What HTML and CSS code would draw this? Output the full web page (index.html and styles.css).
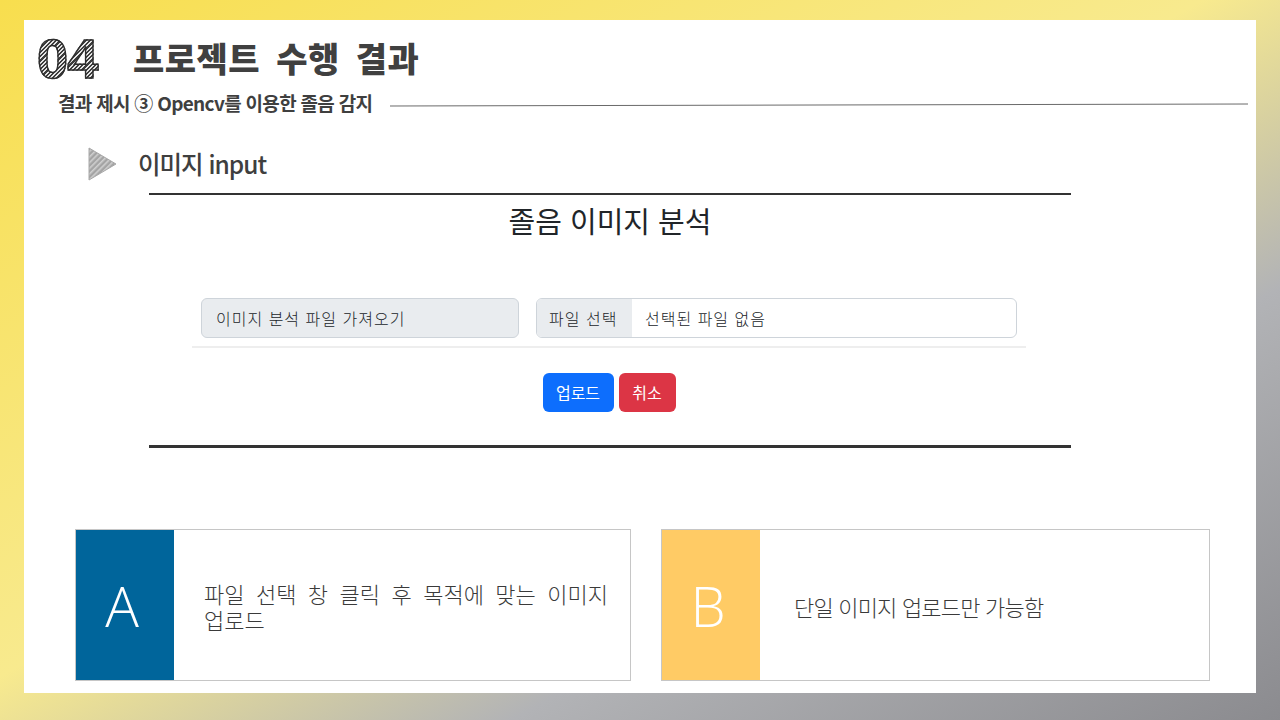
FILE: index.html
```html
<!DOCTYPE html>
<html lang="ko">
<head>
<meta charset="utf-8">
<title>프로젝트 수행 결과</title>
<link rel="stylesheet" href="styles.css">
</head>
<body>
<main class="stage">
  <section class="panel">
    <header class="title-row">
      <span class="number">04</span>
      <h1 class="title">프로젝트 수행 결과</h1>
    </header>
    <div class="sub-row">
      <h2 class="subtitle">결과 제시 ③ Opencv를 이용한 졸음 감지</h2>
      <svg class="sub-line" width="858" height="4" viewBox="0 0 858 4"><line x1="0" y1="3" x2="858" y2="1" stroke="#6a6a6a" stroke-width="1"/></svg>
    </div>
    <div class="section-head">
      <svg class="arrow" width="30" height="34" viewBox="0 0 30 34">
        <defs>
          <pattern id="hatch" width="4" height="4" patternUnits="userSpaceOnUse" patternTransform="rotate(45)">
            <rect width="4" height="4" fill="#a4a4a4"/>
            <rect width="1.6" height="4" fill="#cfcfcf"/>
          </pattern>
        </defs>
        <polygon points="2,1 29,17 2,33" fill="url(#hatch)" stroke="#a8a8a8" stroke-width="1"/>
      </svg>
      <h3 class="section-title">이미지 input</h3>
    </div>
    <div class="shot">
      <h4 class="shot-title">졸음 이미지 분석</h4>
      <div class="form-row">
        <div class="field-label">이미지 분석 파일 가져오기</div>
        <div class="file-input">
          <span class="file-btn">파일 선택</span>
          <span class="file-name">선택된 파일 없음</span>
        </div>
      </div>
      <div class="actions">
        <button class="btn btn-blue">업로드</button>
        <button class="btn btn-red">취소</button>
      </div>
    </div>
    <div class="cards">
      <article class="card card-a">
        <div class="badge badge-a">A</div>
        <p class="card-text card-text-a">파일 선택 창 클릭 후 목적에 맞는 이미지 업로드</p>
      </article>
      <article class="card card-b">
        <div class="badge badge-b">B</div>
        <p class="card-text card-text-b">단일 이미지 업로드만 가능함</p>
      </article>
    </div>
  </section>
</main>
</body>
</html>
```
FILE: styles.css
```css
* { box-sizing: border-box; }
html, body { margin: 0; padding: 0; }
body { font-family: "Noto Sans CJK KR", "Noto Sans", sans-serif; }

.stage {
  width: 1280px;
  height: 720px;
  padding: 20px 24px 27px;
  background: linear-gradient(to bottom right, #f8de4e 0%, #f8ea8e 47%, #b2b3b6 70%, #8b8b8f 100%);
  overflow: hidden;
}
.panel {
  width: 1232px;
  height: 673px;
  background: #fff;
  display: flex;
  flex-direction: column;
  color: #3f3f3f;
}

.title-row {
  display: flex;
  align-items: center;
  height: 60px;
  margin-top: 8px;
  padding-left: 13px;
}
.number {
  width: 96px;
  margin-top: 2px;
  font-family: "Liberation Sans", sans-serif;
  font-weight: 700;
  font-size: 56px;
  line-height: 60px;
  letter-spacing: -1px;
  color: transparent;
  background: repeating-linear-gradient(135deg, #3c3c3c 0 1.6px, #e4e4e4 1.6px 3px);
  -webkit-background-clip: text;
  background-clip: text;
  -webkit-text-stroke: 1.4px #2e2e2e;
}
.title {
  margin: 0;
  font-size: 34px;
  font-weight: 900;
  line-height: 60px;
  word-spacing: 6px;
  letter-spacing: 0.5px;
  color: #404040;
}

.sub-row {
  display: flex;
  align-items: center;
  height: 28px;
  margin-top: 1px;
  padding-left: 34px;
}
.subtitle {
  margin: 0;
  width: 332px;
  font-size: 19px;
  font-weight: 700;
  line-height: 28px;
  letter-spacing: -0.7px;
  white-space: nowrap;
}
.sub-line { display: block; margin-top: 4px; }

.section-head {
  display: flex;
  align-items: center;
  height: 40px;
  margin-top: 27px;
  padding-left: 63px;
  gap: 21px;
}
.arrow { display: block; }
.section-title {
  margin: 0;
  font-size: 24.5px;
  font-weight: 500;
  line-height: 40px;
  letter-spacing: -1px;
}

.shot {
  width: 922px;
  height: 255px;
  margin: 9px 0 0 125px;
  border-top: 2px solid #333;
  border-bottom: 3px solid #333;
  color: #212529;
}
.shot-title {
  margin: 5px 0 0;
  height: 40px;
  font-size: 29px;
  font-weight: 400;
  line-height: 40px;
  text-align: center;
}
.form-row {
  display: flex;
  gap: 17px;
  width: 834px;
  height: 50px;
  margin: 58px 0 0 43px;
  padding: 0 9px;
  border-bottom: 2px solid #eeeeee;
}
.field-label {
  width: 318px;
  height: 40px;
  padding: 0 14px;
  background: #e9ecef;
  border: 1px solid #ced4da;
  border-radius: 6px;
  font-size: 16px;
  font-weight: 300;
  line-height: 38px;
  letter-spacing: 1px;
}
.file-input {
  display: flex;
  width: 481px;
  height: 40px;
  border: 1px solid #ced4da;
  border-radius: 6px;
  overflow: hidden;
  font-size: 16px;
  font-weight: 300;
  line-height: 38px;
  letter-spacing: 1px;
}
.file-btn {
  width: 95px;
  padding-left: 12px;
  background: #e9ecef;
}
.file-name { padding-left: 13px; }

.actions {
  display: flex;
  justify-content: center;
  gap: 5px;
  margin-top: 25px;
  padding-right: 2px;
}
.btn {
  height: 39px;
  border: 0;
  border-radius: 6px;
  color: #fff;
  font: 400 16px/39px "Noto Sans CJK KR", sans-serif;
  padding: 0;
}
.btn-blue { width: 71px; background: #0d6efd; }
.btn-red { width: 57px; background: #dc3545; }

.cards {
  display: flex;
  gap: 30px;
  margin: 81px 0 0 51px;
}
.card {
  display: flex;
  height: 152px;
  border: 1px solid #c6c6c6;
  background: #fff;
}
.card-a { width: 556px; }
.card-b { width: 549px; }
.badge {
  width: 98px;
  display: flex;
  align-items: center;
  justify-content: center;
  padding-right: 6px;
  color: #fff;
  font-family: "Open Sans", sans-serif;
  font-weight: 300;
  font-size: 56px;
}
.badge-a { background: #00659b; }
.badge-b { background: #ffcb65; }
.card-text {
  margin: 0;
  padding-top: 2px;
  font-size: 22px;
  font-weight: 300;
  line-height: 26px;
  color: #3a3a3a;
  align-self: center;
}
.card-text-a {
  width: 404px;
  margin-left: 30px;
  text-align: justify;
  word-break: keep-all;
}
.card-text-b {
  margin-left: 34px;
  letter-spacing: -0.8px;
}
```
